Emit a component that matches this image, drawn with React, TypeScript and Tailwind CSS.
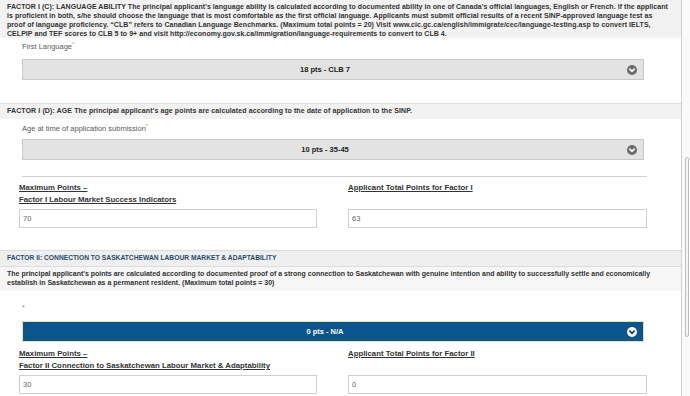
import React from 'react';

const font = { fontFamily: '"Liberation Sans", Arial, sans-serif' };

function Chevron({ dark }: { dark?: boolean }) {
  return (
    <svg width="10" height="10" viewBox="0 0 12 12" className="shrink-0">
      <circle cx="6" cy="6" r="6" fill={dark ? '#ffffff' : '#6b6b6b'} />
      <path
        d="M3.4 5 L6 7.6 L8.6 5"
        fill="none"
        stroke={dark ? '#0b3d66' : '#ffffff'}
        strokeWidth="1.9"
        strokeLinecap="round"
        strokeLinejoin="round"
      />
    </svg>
  );
}

function Select({ value, active }: { value: string; active?: boolean }) {
  return (
    <div
      className={
        active
          ? 'ml-[22px] w-[622px] h-[21px] flex items-center bg-[#0a568c] border border-[#e9e3a8] text-white'
          : 'ml-[22px] w-[622px] h-[21px] flex items-center bg-[#e3e3e3] border border-[#c9c9c9] text-[#222]'
      }
    >
      <span className="flex-1 text-center text-[7.5px] font-bold">{value}</span>
      <span className="pr-[6px]">
        <Chevron dark={active} />
      </span>
    </div>
  );
}

function Label({ text, star = true }: { text: string; star?: boolean }) {
  return (
    <div className="ml-[22px] text-[7.5px] leading-[10px] text-[#5a5a5a]">
      {text}
      {star && <sup className="text-[#e8922e] text-[6px]">*</sup>}
    </div>
  );
}

function TotalsRow({
  leftTop,
  leftBottom,
  right,
  left,
  rightValue,
}: {
  leftTop: string;
  leftBottom: string;
  right: string;
  left: string;
  rightValue: string;
}) {
  return (
    <div className="flex gap-[31px] pl-[19px]">
      <div className="w-[298px]">
        <div className="text-[7.8px] leading-[12px] font-bold underline text-[#333] h-[27px] whitespace-nowrap">
          <div>{leftTop}</div>
          <div>{leftBottom}</div>
        </div>
        <div className="h-[19px] border border-[#cfcfcf] flex items-center px-[3px] text-[7.5px] text-[#666]">
          {left}
        </div>
      </div>
      <div className="w-[299px]">
        <div className="text-[7.8px] leading-[12px] font-bold underline text-[#333] h-[27px]">
          {right}
        </div>
        <div className="h-[19px] border border-[#cfcfcf] flex items-center px-[3px] text-[7.5px] text-[#666]">
          {rightValue}
        </div>
      </div>
    </div>
  );
}

export default function App() {
  return (
    <div className="flex w-[690px] h-[396px] overflow-hidden bg-white" style={font}>
      <div className="w-[682px] border-r border-[#cfcfcf] shrink-0">
        {/* Factor I (C) */}
        <div className="h-[38px] bg-[#f2f2f2] px-[7px] pt-[2px] text-[7px] leading-[9px] font-bold text-[#333] tracking-[0.05px]">
          <div className="whitespace-nowrap">
            FACTOR I (C): LANGUAGE ABILITY The principal applicant's language ability is calculated according to documented ability in one of Canada's official languages, English or French. If the applicant
          </div>
          <div className="whitespace-nowrap">
            is proficient in both, s/he should choose the language that is most comfortable as the first official language. Applicants must submit official results of a recent SINP-approved language test as
          </div>
          <div className="whitespace-nowrap">
            proof of language proficiency. “CLB” refers to Canadian Language Benchmarks. (Maximum total points = 20) Visit www.cic.gc.ca/english/immigrate/cec/language-testing.asp to convert IELTS,
          </div>
          <div className="whitespace-nowrap">
            CELPIP and TEF scores to CLB 5 to 9+ and visit http://economy.gov.sk.ca/immigration/language-requirements to convert to CLB 4.
          </div>
        </div>
        <div className="pt-[4px] h-[21px]">
          <Label text="First Language" />
        </div>
        <Select value="18 pts - CLB 7" />

        {/* Factor I (D) */}
        <div className="mt-[23px] border-t border-[#dedede] h-[16px] bg-[#f2f2f2] px-[7px] flex items-center text-[7px] font-bold text-[#333] tracking-[0.1px] whitespace-nowrap">
          FACTOR I (D): AGE The principal applicant's age points are calculated according to the date of application to the SINP.
        </div>
        <div className="pt-[5px] h-[20px]">
          <Label text="Age at time of application submission" />
        </div>
        <Select value="10 pts - 35-45" />
        <div className="ml-[22px] w-[625px] mt-[16px] border-t border-[#cfcfcf] h-[6px]" />
        <TotalsRow
          leftTop="Maximum Points –"
          leftBottom="Factor I Labour Market Success Indicators"
          right="Applicant Total Points for Factor I"
          left="70"
          rightValue="63"
        />

        {/* Factor II */}
        <div className="mt-[22px] border-t border-b border-[#dcdcdc] h-[17px] bg-[#efefef] px-[7px] flex items-center text-[6.7px] font-bold text-[#1f4d6b] whitespace-nowrap">
          FACTOR II: CONNECTION TO SASKATCHEWAN LABOUR MARKET &amp; ADAPTABILITY
        </div>
        <div className="h-[24px] bg-[#f6f6f6] px-[7px] pt-[2px] text-[7px] leading-[9px] font-bold text-[#333]">
          <div className="whitespace-nowrap">
            The principal applicant's points are calculated according to documented proof of a strong connection to Saskatchewan with genuine intention and ability to successfully settle and economically
          </div>
          <div className="whitespace-nowrap">
            establish in Saskatchewan as a permanent resident. (Maximum total points = 30)
          </div>
        </div>
        <div className="pt-[13px] h-[30px] ml-[22px] text-[7px] leading-[8px] text-[#888]">*</div>
        <Select value="0 pts - N/A" active />
        <div className="h-[6px]" />
        <TotalsRow
          leftTop="Maximum Points –"
          leftBottom="Factor II Connection to Saskatchewan Labour Market & Adaptability"
          right="Applicant Total Points for Factor II"
          left="30"
          rightValue="0"
        />
      </div>
      <div className="flex-1 bg-[#fafafa] pt-[157px] pl-[3px]">
        <div className="w-[4px] h-[180px] rounded-full border border-[#bdbdbd] bg-[#f4f4f4]" />
      </div>
    </div>
  );
}
